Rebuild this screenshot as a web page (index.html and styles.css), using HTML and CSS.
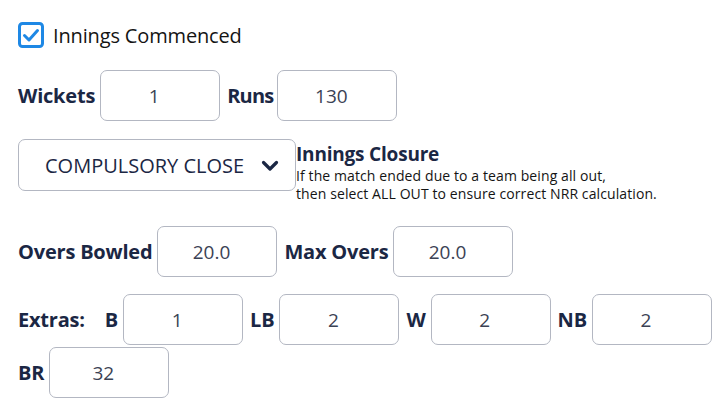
FILE: index.html
```html
<!DOCTYPE html>
<html lang="en">
<head>
  <meta charset="UTF-8">
  <title>Innings Details</title>
  <link rel="stylesheet" href="styles.css">
</head>
<body>
  <div class="innings">
    <label class="check-row">
      <span class="check-box">
        <svg width="26" height="26" viewBox="0 0 26 26">
          <rect x="1.5" y="1.5" width="23" height="23" rx="3" fill="#fff" stroke="#1e88e5" stroke-width="3"/>
          <path d="M6.5 13.5 L11 18 L19.5 8.5" fill="none" stroke="#1e88e5" stroke-width="3" stroke-linecap="round" stroke-linejoin="round"/>
        </svg>
      </span>
      Innings Commenced
    </label>

    <div class="row row-score">
      <span class="lbl">Wickets</span>
      <input class="num" type="text" value="1">
      <span class="lbl lbl-tight">Runs</span>
      <input class="num" type="text" value="130">
    </div>

    <div class="row row-closure">
      <div class="select">
        <span>COMPULSORY CLOSE</span>
        <svg width="18" height="12" viewBox="0 0 18 12">
          <path d="M2.5 2.5 L9 9 L15.5 2.5" fill="none" stroke="#1b2744" stroke-width="3.2" stroke-linecap="round" stroke-linejoin="round"/>
        </svg>
      </div>
      <div class="closure-info">
        <div class="closure-title">Innings Closure</div>
        <div class="closure-help">If the match ended due to a team being all out,<br>then select ALL OUT to ensure correct NRR calculation.</div>
      </div>
    </div>

    <div class="row row-overs">
      <span class="lbl">Overs Bowled</span>
      <input class="num" type="text" value="20.0">
      <span class="lbl">Max Overs</span>
      <input class="num" type="text" value="20.0">
    </div>

    <div class="row row-extras">
      <span class="lbl extras-title">Extras:</span>
      <span class="lbl">B</span>
      <input class="num" type="text" value="1">
      <span class="lbl">LB</span>
      <input class="num" type="text" value="2">
      <span class="lbl">W</span>
      <input class="num" type="text" value="2">
      <span class="lbl">NB</span>
      <input class="num" type="text" value="2">
      <span class="lbl">BR</span>
      <input class="num" type="text" value="32">
    </div>
  </div>
</body>
</html>
```

FILE: styles.css
```css
body {
  margin: 0;
  font-family: "Open Sans", "Noto Sans", sans-serif;
  color: #1b2744;
  background: #fff;
}
.innings {
  padding: 22px 0 0 18px;
}
.check-row {
  display: flex;
  align-items: center;
  gap: 9px;
  font-size: 20px;
  color: #141414;
  height: 26px;
  letter-spacing: -0.15px;
}
.check-box {
  display: flex;
}
.row {
  display: flex;
  align-items: center;
}
.lbl {
  font-weight: 700;
  font-size: 20px;
  margin-right: 5px;
  letter-spacing: -0.2px;
}
.lbl-tight {
  letter-spacing: -0.8px;
  margin-right: 4px;
}
.num {
  box-sizing: border-box;
  width: 120px;
  height: 51px;
  border: 1px solid #b3b7c2;
  border-radius: 7px;
  font-family: inherit;
  font-size: 19px;
  color: #3b4254;
  text-align: center;
  padding: 0 12px 0 0;
  margin-right: 7px;
  background: #fff;
}
.row-score {
  margin-top: 22px;
}
.row-closure {
  margin-top: 18px;
  align-items: flex-start;
}
.select {
  box-sizing: border-box;
  width: 278px;
  height: 52px;
  border: 1px solid #b3b7c2;
  border-radius: 7px;
  display: flex;
  align-items: center;
  justify-content: space-between;
  padding: 0 16px 0 26px;
  font-size: 20px;
  color: #1b2744;
}
.select svg {
  margin-top: 2px;
}
.closure-info {
  padding-top: 2px;
}
.closure-title {
  font-weight: 700;
  font-size: 19px;
  line-height: 26px;
  letter-spacing: -0.2px;
}
.closure-help {
  font-size: 14px;
  line-height: 18px;
  color: #141414;
  letter-spacing: 0.1px;
}
.row-overs {
  margin-top: 23px;
}
.row-extras {
  margin-top: 17px;
  flex-wrap: wrap;
  row-gap: 2px;
  width: 706px;
}
.extras-title {
  margin-right: 20px;
}
```
